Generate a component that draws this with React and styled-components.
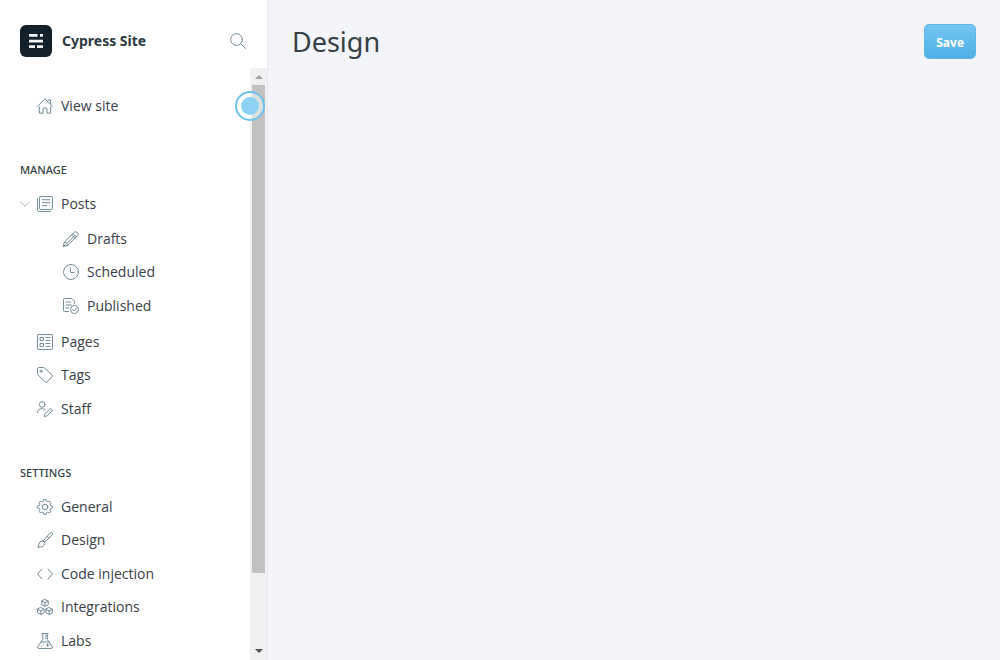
import React from "react";
import styled, { createGlobalStyle, css } from "styled-components";

const Global = createGlobalStyle`
  *, *::before, *::after { box-sizing: border-box; }
  body {
    margin: 0;
    background: #f2f4f8;
    color: #394047;
    font-family: "Open Sans", "Noto Sans", sans-serif;
    font-size: 14px;
  }
`;

const Layout = styled.div`
  display: flex;
  height: 100vh;
`;

const Sidebar = styled.nav`
  display: flex;
  flex-direction: column;
  flex: 0 0 268px;
  background: #fff;
  border-right: 1px solid #e5e9f1;
`;

const Brand = styled.header`
  display: flex;
  align-items: center;
  gap: 10px;
  padding: 25px 21px 11px 20px;
`;

const Logo = styled.svg`
  width: 32px;
  height: 32px;
`;

const SiteName = styled.strong`
  flex: 1;
  color: #2b3840;
  font-family: "Noto Sans", "Open Sans", sans-serif;
  font-size: 14px;
  line-height: 32px;
  font-weight: 700;
`;

const SearchButton = styled.button`
  display: flex;
  padding: 0;
  border: 0;
  background: none;
`;

const SidebarBody = styled.div`
  position: relative;
  display: flex;
  flex: 1;
  min-height: 0;
`;

const Menu = styled.div`
  flex: 1;
  overflow: hidden;
  padding: 21px 0 0 20px;
`;

const List = styled.ul`
  display: flex;
  flex-direction: column;
  justify-content: space-between;
  min-height: ${(p) => p.$min || 0}px;
  margin: 0;
  padding: 0;
  list-style: none;
`;

const SubList = styled(List)`
  margin: 2px 0 3px;
  padding-left: 26px;
`;

const Row = styled.div`
  display: flex;
  align-items: center;
  height: 33px;
`;

const Toggle = styled.button`
  display: flex;
  width: 17px;
  padding: 0;
  border: 0;
  background: none;
`;

const MenuLink = styled.a`
  display: flex;
  align-items: center;
  gap: 8px;
  margin-left: ${(p) => (p.$toggled ? 0 : 17)}px;
  color: #394047;
  line-height: 20px;
  text-decoration: none;
`;

const SectionTitle = styled.h4`
  margin: 38px 0 8px;
  color: #343f44;
  font-family: "Noto Sans", "Open Sans", sans-serif;
  font-size: 11px;
  line-height: 19px;
  font-weight: 500;
  text-transform: uppercase;
`;

const Icon = styled.svg`
  display: block;
  flex: none;
  width: ${(p) => p.$size || 16}px;
  height: ${(p) => p.$size || 16}px;
  fill: none;
  stroke: ${(p) => p.$color || "#738a94"};
  stroke-width: 1.5;
  stroke-linecap: round;
  stroke-linejoin: round;
`;

const Scrollbar = styled.div`
  display: flex;
  flex-direction: column;
  width: 17px;
  background: #f0f0f0;
`;

const arrow = css`
  content: "";
  border: 4px solid transparent;
`;

const ScrollArrow = styled.span`
  display: flex;
  justify-content: center;
  height: 17px;
  padding-top: ${(p) => (p.$down ? 6 : 3)}px;
  &::before {
    ${arrow}
    height: 8px;
    ${(p) => (p.$down ? "border-top-color: #505050;" : "border-bottom-color: #a3a3a3;")}
  }
`;

const Track = styled.div`
  flex: 1;
  padding: 0 2px;
`;

const Thumb = styled.div`
  height: 87.5%;
  background: #c1c1c1;
`;

const Beacon = styled.button`
  position: absolute;
  top: 23px;
  right: 2px;
  display: grid;
  place-items: center;
  width: 30px;
  height: 30px;
  padding: 0;
  border: 2px solid #6bc3f1;
  border-radius: 50%;
  background: rgba(255, 255, 255, 0.5);
  &::before {
    content: "";
    width: 18px;
    height: 18px;
    border-radius: 50%;
    background: #8ed3f6;
  }
`;

const Main = styled.main`
  flex: 1;
  min-width: 0;
`;

const PageHeader = styled.header`
  display: flex;
  align-items: center;
  justify-content: space-between;
  padding: 24px;
`;

const PageTitle = styled.h2`
  margin: 0;
  color: #343f44;
  font-family: "Noto Sans", "Open Sans", sans-serif;
  font-size: 27px;
  line-height: 34px;
  font-weight: 400;
`;

const SaveButton = styled.button`
  height: 35px;
  padding: 2px 11px 0;
  border: 1px solid #5cb5e8;
  border-radius: 5px;
  background: linear-gradient(#74c5f1, #50afe5);
  color: #fff;
  font-family: inherit;
  font-size: 12px;
  font-weight: 700;
`;

const cube = (x, y) => (
  <>
    <path d={`M${x} ${y - 5}l4.900 2.300v5.400l-4.900 2.500l-4.900-2.500v-5.400z`} />
    <path d={`M${x - 4.6} ${y - 2.4}l4.600 2.200l4.600-2.200M${x} ${y - 0.2}v5`} />
  </>
);

/* Eight teeth: each has two outer corners and a rounded valley after it. */
const gearPath = () => {
  const at = (radius, degrees) => {
    const a = (degrees * Math.PI) / 180;
    return `${(12 + radius * Math.sin(a)).toFixed(2)} ${(12 - radius * Math.cos(a)).toFixed(2)}`;
  };
  let d = "";
  for (let k = 0; k < 8; k += 1) {
    const mid = k * 45;
    d += `${k ? "L" : "M"}${at(11.2, mid - 8)}L${at(11.2, mid + 8)}`;
    d += `Q${at(7.6, mid + 15)} ${at(8.8, mid + 22.5)}Q${at(7.6, mid + 30)} ${at(11.2, mid + 37)}`;
  }
  return `${d}z`;
};

const icons = {
  home: (
    <path d="M.8 12.5L12 1.3l11.2 11.2M16.5 3h4v6.5M3.5 13v9.7H9V16.5q0-1.5 1.5-1.5h3q1.5 0 1.5 1.5v6.2h5.5V13" />
  ),
  posts: (
    <>
      <rect x="3.7" y=".8" width="19.5" height="19.4" rx="1.2" />
      <path d="M.8 3.8v17.9q0 1.5 1.5 1.5h17.9M8 5.6h11M8 10h11M8 14.5h6.5" />
    </>
  ),
  drafts: (
    <path d="M2.3 16.5L17.3 1.6q2-1.4 4.1.7t.8 4.2L7.4 21.5L.8 23.2zM2.3 16.500q3.800.900 5.100 5M15 4l5 5M18 6.500L6 18.500M.8 23.200l2.500-2.700M13 6l5 5" />
  ),
  scheduled: (
    <>
      <circle cx="12" cy="12" r="11.2" />
      <path d="M11.2 6v6.7h5.5" />
    </>
  ),
  published: (
    <>
      <path d="M8.2 20.3H2.3Q.8 20.3.8 18.8V2.3Q.8.8 2.3.8h11l4.2 4.2v3.8M4.5 6h7M4.5 10.5h8M4.5 15h4" />
      <circle cx="17.3" cy="17.3" r="6" />
      <path d="M14.4 17.5l2 2l3.7-4.5" />
    </>
  ),
  pages: (
    <>
      <rect x=".8" y=".8" width="22.4" height="22.4" rx="1.2" />
      <path d="M5.2 5.2h4.5v4.5H5.2zM5.2 14.2h4.5v4.5H5.2zM13.5 5.2h6M13.5 9.7h6M13.5 14.2h6M13.5 18.7h6" />
    </>
  ),
  tags: (
    <>
      <path d="M.8 2.3Q.8.8 2.3.8h7.2q1 0 1.8.7l11.2 10.6q1.2 1.2 0 2.4l-7.6 8q-1.2 1.2-2.4 0L1.5 11.8Q.8 11 .8 10z" />
      <circle cx="6.2" cy="6.2" r="1.6" />
    </>
  ),
  staff: (
    <>
      <circle cx="7.7" cy="5.2" r="4.2" />
      <path d="M.8 17.5q0-6 6.9-6q3 0 4.8 1.8M12.2 18.8l6.8-6.7q1.5-1.2 3 .2t.3 3l-6.9 6.9l-4.2 1z" />
    </>
  ),
  settings: (
    <>
      <circle cx="12" cy="12" r="4.2" />
      <path d={gearPath()} />
    </>
  ),
  design: (
    <path d="M9.2 13.2L19.8 1.5q1.5-1.2 2.8 0t.2 2.9L11.4 15.3M9.2 13.2l2.2 2.1M8.2 13q3.6.6 3.6 4q-.6 5.9-11 6q2.2-1.7 2-4.5q.8-5 5.4-5.5M15 6.8l2.4 2.5" />
  ),
  code: <path d="M7.5 4.5L.8 12l6.7 7.5M16.5 4.5l6.7 7.5l-6.7 7.5" />,
  integrations: (
    <>
      {cube(12, 5.8)}
      {cube(5.8, 18)}
      {cube(18.2, 18)}
    </>
  ),
  labs: (
    <path d="M7.2.8h9.6M8.7.8v8.9L1.2 20.5q-1 2.7 1.5 2.7h18.6q2.5 0 1.5-2.7L15.3 9.7V.8M6 13.5h12M15.3 4.2h-3M15.3 7.5h-3M14 18h4M16 16v4M6.5 19.5h.2M9.7 17h.2" />
  ),
  search: (
    <>
      <circle cx="9.8" cy="9.8" r="8.8" />
      <path d="M16.2 16.2l7 7" />
    </>
  ),
};

function Item({ icon, label, toggled }) {
  return (
    <Row>
      {toggled && (
        <Toggle aria-label="Toggle posts">
          <Icon $size={10} $color="#abb8be" viewBox="0 0 15 15">
            <path d="M1 4.5l6.5 6.5L14 4.5" />
          </Icon>
        </Toggle>
      )}
      <MenuLink href="#" $toggled={toggled}>
        <Icon viewBox="0 0 24 24" aria-hidden="true">{icons[icon]}</Icon>
        {label}
      </MenuLink>
    </Row>
  );
}

const Items = ({ entries }) =>
  entries.map(([icon, label]) => (
    <li key={label}>
      <Item icon={icon} label={label} />
    </li>
  ));

export default function App() {
  return (
    <Layout>
      <Global />
      <Sidebar>
        <Brand>
          <Logo viewBox="0 0 32 32" aria-hidden="true">
            <rect width="32" height="32" rx="6" fill="#15212a" />
            <path
              fill="#f1f5f7"
              d="M9 9h8.500v2.700H9zM20 9h3v2.700h-3zM9 14.700h14v2.700H9zM9 20.300h6v2.700H9zM17 20.300h6v2.700h-6z"
            />
          </Logo>
          <SiteName>Cypress Site</SiteName>
          <SearchButton aria-label="Search">
            <Icon viewBox="0 0 24 24">{icons.search}</Icon>
          </SearchButton>
        </Brand>
        <SidebarBody>
          <Menu>
            <List>
              <Items entries={[["home", "View site"]]} />
            </List>
            <SectionTitle>Manage</SectionTitle>
            <List>
              <li>
                <Item icon="posts" label="Posts" toggled />
                <SubList $min={100}>
                  <Items
                    entries={[
                      ["drafts", "Drafts"],
                      ["scheduled", "Scheduled"],
                      ["published", "Published"],
                    ]}
                  />
                </SubList>
              </li>
            </List>
            <List $min={100}>
              <Items
                entries={[
                  ["pages", "Pages"],
                  ["tags", "Tags"],
                  ["staff", "Staff"],
                ]}
              />
            </List>
            <SectionTitle>Settings</SectionTitle>
            <List $min={167}>
              <Items
                entries={[
                  ["settings", "General"],
                  ["design", "Design"],
                  ["code", "Code injection"],
                  ["integrations", "Integrations"],
                  ["labs", "Labs"],
                ]}
              />
            </List>
          </Menu>
          <Scrollbar aria-hidden="true">
            <ScrollArrow />
            <Track>
              <Thumb />
            </Track>
            <ScrollArrow $down />
          </Scrollbar>
          <Beacon aria-label="Start tour" />
        </SidebarBody>
      </Sidebar>
      <Main>
        <PageHeader>
          <PageTitle>Design</PageTitle>
          <SaveButton>Save</SaveButton>
        </PageHeader>
      </Main>
    </Layout>
  );
}
